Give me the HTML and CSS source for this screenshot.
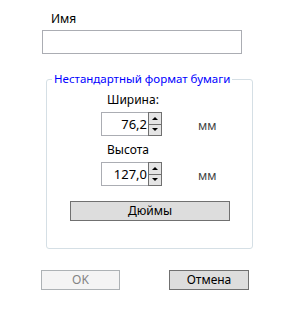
FILE: index.html
```html
<!DOCTYPE html>
<html lang="ru">
<head>
  <meta charset="UTF-8">
  <title>Формат бумаги</title>
  <link rel="stylesheet" href="styles.css">
</head>
<body>
  <div class="dialog">
    <div class="name-label">Имя</div>
    <div class="name-box"></div>

    <fieldset class="group">
      <legend>Нестандартный формат бумаги</legend>
      <div class="group-body">
        <div class="field-label">Ширина:</div>
        <div class="field-row">
          <div class="spin">
            <div class="spin-value">76,2</div>
            <div class="spin-btns">
              <div class="spin-btn"><span class="tri-up"></span></div>
              <div class="spin-btn"><span class="tri-down"></span></div>
            </div>
          </div>
          <div class="unit">мм</div>
        </div>
        <div class="field-label">Высота</div>
        <div class="field-row">
          <div class="spin">
            <div class="spin-value">127,0</div>
            <div class="spin-btns">
              <div class="spin-btn"><span class="tri-up"></span></div>
              <div class="spin-btn"><span class="tri-down"></span></div>
            </div>
          </div>
          <div class="unit">мм</div>
        </div>
        <div class="btn inches">Дюймы</div>
      </div>
    </fieldset>

    <div class="actions">
      <div class="btn disabled">OK</div>
      <div class="btn cancel">Отмена</div>
    </div>
  </div>
</body>
</html>
```

FILE: styles.css
```css
html,
body {
  margin: 0;
  padding: 0;
  background: #FFFFFF;
  font-family: 'Segoe UI', 'Noto Sans', 'Liberation Sans', sans-serif;
  font-size: 12px;
  color: #000000;
}
.dialog {
  width: 284px;
  height: 311px;
  padding-top: 11px;
  box-sizing: border-box;
}
.name-label {
  margin-left: 51px;
  height: 16px;
  line-height: 16px;
}
.name-box {
  margin: 3px 0 0 42px;
  width: 200px;
  height: 24px;
  box-sizing: border-box;
  border: 1px solid #ABADB3;
  background: #FFFFFF;
}
.group {
  margin: 18px 0 0 46px;
  padding: 0;
  width: 207px;
  height: 177px;
  box-sizing: border-box;
  border: 1px solid #D5DFE5;
  border-radius: 3px;
}
.group legend {
  margin-left: 5px;
  padding: 0 2px;
  color: #0000FF;
  line-height: 14px;
  font-size: 11.5px;
  white-space: nowrap;
}
.group-body {
  padding-left: 54px;
}
.field-label {
  margin-top: 6px;
  padding-left: 6px;
  height: 16px;
  line-height: 16px;
}
.field-row {
  display: flex;
  align-items: center;
  margin-top: 4px;
}
.spin {
  display: flex;
  height: 24px;
}
.spin-value {
  width: 47px;
  box-sizing: border-box;
  border: 1px solid #ABADB3;
  border-right: none;
  text-align: right;
  padding-right: 1px;
  line-height: 22px;
  font-size: 13px;
}
.spin-btns {
  display: flex;
  flex-direction: column;
  width: 14px;
}
.spin-btn {
  flex: 1;
  display: flex;
  align-items: center;
  justify-content: center;
  background: #E5E5E5;
  border: 1px solid #707070;
}
.spin-btn + .spin-btn {
  border-top: none;
}
.tri-up,
.tri-down {
  width: 0;
  height: 0;
  border-left: 3px solid transparent;
  border-right: 3px solid transparent;
}
.tri-up {
  border-bottom: 3px solid #000000;
}
.tri-down {
  border-top: 3px solid #000000;
}
.unit {
  margin-left: 36px;
  margin-top: 3px;
  color: #444444;
}
.btn {
  height: 20px;
  box-sizing: border-box;
  border: 1px solid #707070;
  background: #DDDDDD;
  text-align: center;
  line-height: 18px;
}
.inches {
  margin: 15px 0 0 -31px;
  width: 160px;
}
.actions {
  display: flex;
  margin: 21px 0 0 41px;
  gap: 49px;
}
.actions .btn {
  width: 80px;
}
.btn.disabled {
  width: 79px;
  border-color: #ADB2B5;
  background: #F4F4F4;
  color: #838383;
}
```
